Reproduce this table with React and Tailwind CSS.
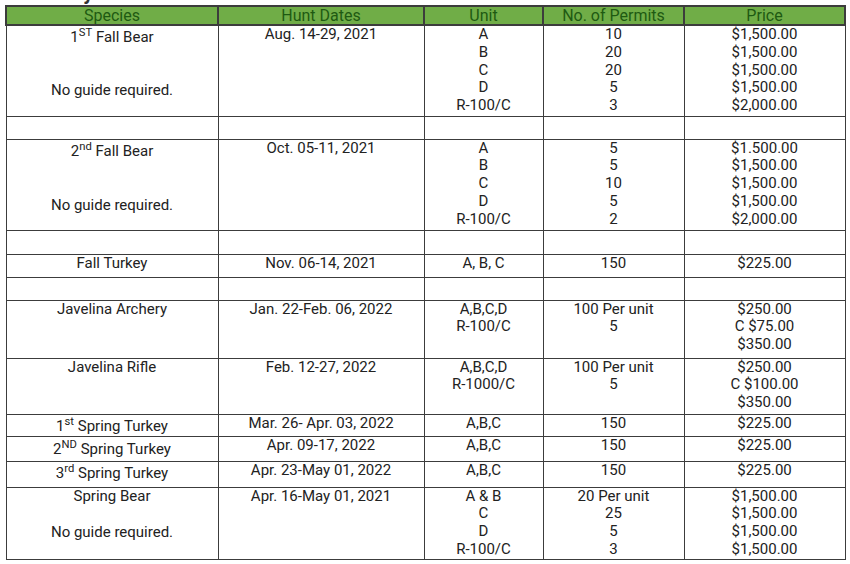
import React from 'react'

const bd = 'border border-[#3c3c3c]'

function Lines({ items }) {
  return items.map((t, i) => <div key={i}>{t}</div>)
}

function Row({ h, species, dates, units = [], permits = [], prices = [], speciesPad = 'pt-0' }) {
  return (
    <tr className={h}>
      <td className={`${bd} align-top ${speciesPad}`}>{species}</td>
      <td className={`${bd} align-top`}>{dates}</td>
      <td className={`${bd} align-top`}><Lines items={units} /></td>
      <td className={`${bd} align-top`}><Lines items={permits} /></td>
      <td className={`${bd} align-top`}><Lines items={prices} /></td>
    </tr>
  )
}

function Spacer({ h }) {
  return (
    <tr className={h}>
      <td className={bd}></td>
      <td className={bd}></td>
      <td className={bd}></td>
      <td className={bd}></td>
      <td className={bd}></td>
    </tr>
  )
}

export default function App() {
  return (
    <div className="w-[850px] h-[564px] bg-white overflow-hidden font-['Roboto',_'Liberation_Sans',_sans-serif] text-[#222]">
      {/* heading above the table, mostly cropped out of frame */}
      <div className="h-[5px] overflow-hidden flex items-end pl-[7px]">
        <span className="text-[20px] leading-[24px] font-bold text-[#333]">Summary</span>
      </div>

      <div className="pl-[5px]">
        <table className="table-fixed border-collapse text-center text-[15px] leading-[17.75px] w-[839px]">
          <colgroup>
            <col className="w-[212px]" />
            <col className="w-[206px]" />
            <col className="w-[119px]" />
            <col className="w-[141px]" />
            <col className="w-[161px]" />
          </colgroup>
          <thead>
            <tr className="h-[19px] bg-[#70ad47] text-[#1e5a12] text-[16px]">
              <th className="border-2 border-[#3c3c3c] font-normal leading-[15px]">Species</th>
              <th className="border-2 border-[#3c3c3c] font-normal leading-[15px]">Hunt Dates</th>
              <th className="border-2 border-[#3c3c3c] font-normal leading-[15px]">Unit</th>
              <th className="border-2 border-[#3c3c3c] font-normal leading-[15px]">No. of Permits</th>
              <th className="border-2 border-[#3c3c3c] font-normal leading-[15px]">Price</th>
            </tr>
          </thead>
          <tbody>
            <Row
              h="h-[91px]"
              speciesPad="pt-[3px]"
              species={<>
                <div>1<sup>ST</sup> Fall Bear</div>
                <div className="mt-[35.5px]">No guide required.</div>
              </>}
              dates="Aug. 14-29, 2021"
              units={['A', 'B', 'C', 'D', 'R-100/C']}
              permits={['10', '20', '20', '5', '3']}
              prices={['$1,500.00', '$1,500.00', '$1,500.00', '$1,500.00', '$2,000.00']}
            />
            <Spacer h="h-[23px]" />
            <Row
              h="h-[91px]"
              speciesPad="pt-[3px]"
              species={<>
                <div>2<sup>nd</sup> Fall Bear</div>
                <div className="mt-[36.5px]">No guide required.</div>
              </>}
              dates="Oct. 05-11, 2021"
              units={['A', 'B', 'C', 'D', 'R-100/C']}
              permits={['5', '5', '10', '5', '2']}
              prices={['$1.500.00', '$1,500.00', '$1,500.00', '$1,500.00', '$2,000.00']}
            />
            <Spacer h="h-[24px]" />
            <Row
              h="h-[23px]"
              species="Fall Turkey"
              dates="Nov. 06-14, 2021"
              units={['A, B, C']}
              permits={['150']}
              prices={['$225.00']}
            />
            <Spacer h="h-[23px]" />
            <Row
              h="h-[58px]"
              species="Javelina Archery"
              dates="Jan. 22-Feb. 06, 2022"
              units={['A,B,C,D', 'R-100/C']}
              permits={['100 Per unit', '5']}
              prices={['$250.00', 'C $75.00', '$350.00']}
            />
            <Row
              h="h-[56px]"
              species="Javelina Rifle"
              dates="Feb. 12-27, 2022"
              units={['A,B,C,D', 'R-1000/C']}
              permits={['100 Per unit', '5']}
              prices={['$250.00', 'C $100.00', '$350.00']}
            />
            <Row
              h="h-[22px]"
              speciesPad="pt-[3px]"
              species={<>1<sup>st</sup> Spring Turkey</>}
              dates="Mar. 26- Apr. 03, 2022"
              units={['A,B,C']}
              permits={['150']}
              prices={['$225.00']}
            />
            <Row
              h="h-[25px]"
              speciesPad="pt-[4px]"
              species={<>2<sup>ND</sup> Spring Turkey</>}
              dates="Apr. 09-17, 2022"
              units={['A,B,C']}
              permits={['150']}
              prices={['$225.00']}
            />
            <Row
              h="h-[26px]"
              speciesPad="pt-[3px]"
              species={<>3<sup>rd</sup> Spring Turkey</>}
              dates="Apr. 23-May 01, 2022"
              units={['A,B,C']}
              permits={['150']}
              prices={['$225.00']}
            />
            <Row
              h="h-[72px]"
              species={<>
                <div>Spring Bear</div>
                <div className="mt-[19px]">No guide required.</div>
              </>}
              dates="Apr. 16-May 01, 2021"
              units={['A & B', 'C', 'D', 'R-100/C']}
              permits={['20 Per unit', '25', '5', '3']}
              prices={['$1,500.00', '$1,500.00', '$1,500.00', '$1,500.00']}
            />
          </tbody>
        </table>
      </div>
    </div>
  )
}
